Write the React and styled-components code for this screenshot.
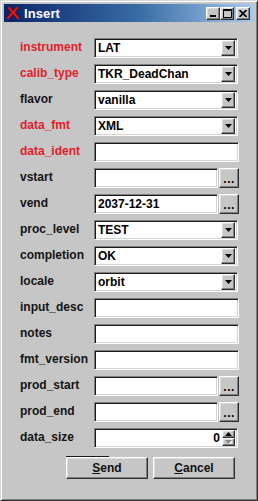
import React from 'react';
import styled, { createGlobalStyle, css } from 'styled-components';

const FACE = '#c6c6c6';

const GlobalStyle = createGlobalStyle`
  html, body { margin: 0; padding: 0; background: ${FACE}; }
  body { font-family: "Liberation Sans", Arial, sans-serif; }
  * { box-sizing: border-box; }
`;

const raised = css`
  border-style: solid;
  border-width: 1px;
  border-color: #ffffff #303030 #303030 #ffffff;
  box-shadow: inset -1px -1px 0 #808080, inset 1px 1px 0 #dcdcdc;
  background: ${FACE};
`;

const sunken = css`
  border-style: solid;
  border-width: 1px;
  border-color: #808080 #ffffff #ffffff #808080;
  box-shadow: inset 1px 1px 0 #1a1a1a, inset -1px -1px 0 #d4d4d4;
  background: #ffffff;
`;

const Window = styled.div`
  width: 258px;
  height: 501px;
  background: ${FACE};
  border-style: solid;
  border-width: 1px;
  border-color: #d8d8d8 #303030 #303030 #d8d8d8;
  box-shadow: inset 1px 1px 0 #ffffff, inset -1px -1px 0 #808080;
  padding: 3px;
  display: flex;
  flex-direction: column;
`;

const TitleBar = styled.div`
  height: 18px;
  display: flex;
  align-items: center;
  padding: 0 4px 0 3px;
  background: linear-gradient(to right, #0a246a 0%, #3a6ea5 55%, #a6caf0 100%);
`;

const TitleIcon = styled.svg`
  width: 12px;
  height: 12px;
  flex: none;
`;

const TitleText = styled.span`
  margin-left: 5px;
  color: #ffffff;
  font-weight: bold;
  font-size: 13px;
  flex: 1;
  letter-spacing: 0.1px;
`;

const TitleButton = styled.div`
  ${raised};
  width: 14px;
  height: 13px;
  display: flex;
  align-items: center;
  justify-content: center;
  margin-left: ${(p) => (p.$gap ? '2px' : '0')};
`;

const Form = styled.div`
  display: grid;
  grid-template-columns: 74px 145px;
  grid-auto-rows: 20px;
  row-gap: 6px;
  padding: 16px 0 0 16px;
  align-items: center;
`;

const Label = styled.div`
  font-size: 12px;
  font-weight: bold;
  color: ${(p) => (p.$required ? '#e2202b' : '#141414')};
  white-space: nowrap;
  margin-top: -2px;
`;

const FieldText = css`
  font-size: 12px;
  font-weight: bold;
  color: #000;
  white-space: nowrap;
`;

const Combo = styled.div`
  ${sunken};
  width: 144px;
  height: 20px;
  display: flex;
  align-items: center;
  padding: 2px;
`;

const ComboValue = styled.span`
  ${FieldText};
  flex: 1;
  padding-left: 1px;
`;

const ArrowButton = styled.div`
  ${raised};
  width: 14px;
  height: 16px;
  display: flex;
  align-items: center;
  justify-content: center;
`;

const Entry = styled.div`
  ${sunken};
  width: ${(p) => p.$w || 145}px;
  height: 20px;
  display: flex;
  align-items: center;
  justify-content: ${(p) => (p.$right ? 'flex-end' : 'flex-start')};
  padding: 2px 2px 2px 3px;
  ${FieldText};
`;

const EntryRow = styled.div`
  display: flex;
  gap: 1px;
  align-items: center;
`;

const DotsButton = styled.div`
  ${raised};
  width: 20px;
  height: 20px;
  display: flex;
  align-items: flex-end;
  justify-content: center;
  padding-bottom: 3px;
  font-size: 12px;
  font-weight: bold;
  line-height: 10px;
  letter-spacing: 0.5px;
`;

const Spin = styled.div`
  ${sunken};
  width: 144px;
  height: 20px;
  display: flex;
  align-items: center;
  padding: 2px;
`;

const SpinValue = styled.span`
  ${FieldText};
  flex: 1;
  text-align: right;
  padding-right: 2px;
`;

const SpinArrows = styled.div`
  display: flex;
  flex-direction: column;
  width: 13px;
  height: 16px;
`;

const SpinArrow = styled.div`
  ${raised};
  flex: 1;
  display: flex;
  align-items: center;
  justify-content: center;
`;

const ButtonRow = styled.div`
  display: flex;
  gap: 5px;
  padding-left: 62px;
  margin-top: 9px;
`;

const DialogButton = styled.div`
  ${raised};
  position: relative;
  width: 82px;
  height: 22px;
  display: flex;
  align-items: center;
  justify-content: center;
  font-size: 12px;
  font-weight: bold;
  color: #111;
  ${(p) =>
    p.$default &&
    css`
      &::before {
        content: '';
        position: absolute;
        left: -1px;
        top: -2px;
        width: 43px;
        height: 1px;
        background: #1a1a1a;
      }
    `}
`;

const Mnemonic = styled.span`
  text-decoration: underline;
  text-underline-offset: 1px;
`;

const DownTriangle = ({ color = '#000' }) => (
  <svg width="7" height="4" viewBox="0 0 7 4">
    <polygon points="0,0 7,0 3.5,4" fill={color} />
  </svg>
);

const SmallTri = ({ up, disabled }) => (
  <svg width="7" height="4" viewBox="0 0 7 4">
    {disabled && (
      <polygon points={up ? '1,5 8,5 4.5,1' : '1,1 8,1 4.5,5'} fill="#ffffff" />
    )}
    <polygon
      points={up ? '0,4 7,4 3.5,0' : '0,0 7,0 3.5,4'}
      fill={disabled ? '#8a8a8a' : '#000'}
    />
  </svg>
);

const ComboField = ({ value }) => (
  <Combo>
    <ComboValue>{value}</ComboValue>
    <ArrowButton>
      <DownTriangle />
    </ArrowButton>
  </Combo>
);

const DateField = ({ value }) => (
  <EntryRow>
    <Entry $w={125}>{value}</Entry>
    <DotsButton>...</DotsButton>
  </EntryRow>
);

const rows = [
  { label: 'instrument', req: true, type: 'combo', value: 'LAT' },
  { label: 'calib_type', req: true, type: 'combo', value: 'TKR_DeadChan' },
  { label: 'flavor', type: 'combo', value: 'vanilla' },
  { label: 'data_fmt', req: true, type: 'combo', value: 'XML' },
  { label: 'data_ident', req: true, type: 'entry', value: '' },
  { label: 'vstart', type: 'date', value: '' },
  { label: 'vend', type: 'date', value: '2037-12-31' },
  { label: 'proc_level', type: 'combo', value: 'TEST' },
  { label: 'completion', type: 'combo', value: 'OK' },
  { label: 'locale', type: 'combo', value: 'orbit' },
  { label: 'input_desc', type: 'entry', value: '' },
  { label: 'notes', type: 'entry', value: '' },
  { label: 'fmt_version', type: 'entry', value: '' },
  { label: 'prod_start', type: 'date', value: '' },
  { label: 'prod_end', type: 'date', value: '' },
  { label: 'data_size', type: 'spin', value: '0' },
];

const renderField = (r) => {
  switch (r.type) {
    case 'combo':
      return <ComboField value={r.value} />;
    case 'date':
      return <DateField value={r.value} />;
    case 'spin':
      return (
        <Spin>
          <SpinValue>{r.value}</SpinValue>
          <SpinArrows>
            <SpinArrow>
              <SmallTri up />
            </SpinArrow>
            <SpinArrow>
              <SmallTri disabled />
            </SpinArrow>
          </SpinArrows>
        </Spin>
      );
    default:
      return <Entry>{r.value}</Entry>;
  }
};

export default function App() {
  return (
    <>
      <GlobalStyle />
      <Window>
        <TitleBar>
          <TitleIcon viewBox="0 0 12 12">
            <path d="M2 1 L11 11" stroke="#5a0000" strokeWidth="3.2" strokeLinecap="round" />
            <path d="M10 1 L1 11" stroke="#5a0000" strokeWidth="3.2" strokeLinecap="round" />
            <path d="M2 1 L11 11" stroke="#e01818" strokeWidth="2" strokeLinecap="round" />
            <path d="M10 1 L1 11" stroke="#e01818" strokeWidth="2" strokeLinecap="round" />
          </TitleIcon>
          <TitleText>Insert</TitleText>
          <TitleButton>
            <svg width="8" height="8" viewBox="0 0 8 8">
              <rect x="1" y="6" width="6" height="2" fill="#000" />
            </svg>
          </TitleButton>
          <TitleButton>
            <svg width="9" height="9" viewBox="0 0 9 9">
              <rect x="0.5" y="0.5" width="8" height="8" fill="none" stroke="#000" />
              <rect x="0" y="0" width="9" height="2" fill="#000" />
            </svg>
          </TitleButton>
          <TitleButton $gap>
            <svg width="8" height="7" viewBox="0 0 8 7">
              <path d="M0.5 0 L7.5 7 M7.5 0 L0.5 7" stroke="#000" strokeWidth="1.6" />
            </svg>
          </TitleButton>
        </TitleBar>
        <Form>
          {rows.map((r) => (
            <React.Fragment key={r.label}>
              <Label $required={r.req}>{r.label}</Label>
              {renderField(r)}
            </React.Fragment>
          ))}
        </Form>
        <ButtonRow>
          <DialogButton $default>
            <span>
              <Mnemonic>S</Mnemonic>end
            </span>
          </DialogButton>
          <DialogButton>
            <span>
              <Mnemonic>C</Mnemonic>ancel
            </span>
          </DialogButton>
        </ButtonRow>
      </Window>
    </>
  );
}
